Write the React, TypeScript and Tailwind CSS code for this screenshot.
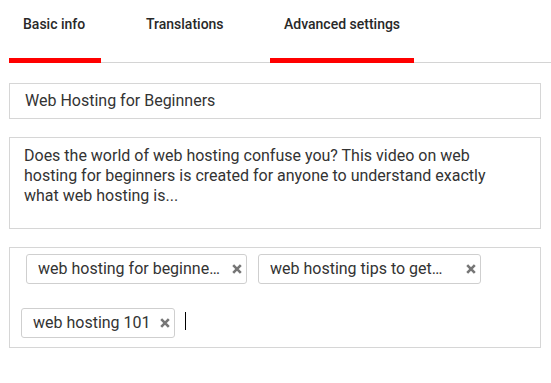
import React from "react"

type Tab = { label: string; width: string; active: boolean }

const tabs: Tab[] = [
  { label: "Basic info", width: "w-[92px]", active: true },
  { label: "Translations", width: "w-[107px]", active: false },
  { label: "Advanced settings", width: "w-[144px]", active: true },
]

function CloseIcon() {
  return (
    <svg width="10" height="10" viewBox="0 0 10 10" className="shrink-0">
      <path d="M1.2 1.2 L8.8 8.8 M8.8 1.2 L1.2 8.8" stroke="#767676" strokeWidth="2.6" />
    </svg>
  )
}

function Chip({ text, width, className = "" }: { text: string; width: string; className?: string }) {
  return (
    <div
      className={`flex h-[30px] ${width} items-center rounded-[3px] border border-[#cfcfcf] pl-[11px] pr-[4px] ${className}`}
    >
      <span className="flex-1 truncate whitespace-nowrap text-[16px] leading-[20px] text-[#333]">{text}</span>
      <CloseIcon />
    </div>
  )
}

export default function App() {
  return (
    <div className="h-[383px] w-[551px] overflow-hidden bg-white font-['Roboto',sans-serif] text-[#333]">
      {/* Tabs */}
      <div className="ml-[9px] flex gap-[31px] border-b border-[#d4d4d4]">
        {tabs.map((t) => (
          <div key={t.label} className={`-mb-px flex h-[63px] ${t.width} flex-col justify-between`}>
            <div className="pl-[14px] pt-[16px] text-[14px] font-medium leading-[16px] whitespace-nowrap text-[#282828]">
              {t.label}
            </div>
            <div className={`h-[5px] ${t.active ? "bg-[#ff0000]" : "bg-transparent"}`} />
          </div>
        ))}
      </div>

      {/* Title */}
      <div className="ml-[9px] mr-[10px] mt-[20px] flex h-[36px] items-center border border-[#d6d6d6] pl-[15px] text-[16px] leading-[20px]">
        Web Hosting for Beginners
      </div>

      {/* Description */}
      <div className="ml-[9px] mr-[10px] mt-[18px] h-[92px] border border-[#d6d6d6] pl-[14px] pr-[14px] pt-[8px] text-[16px] leading-[20px]">
        Does the world of web hosting confuse you? This video on web
        <br />
        hosting for beginners is created for anyone to understand exactly
        <br />
        what web hosting is...
      </div>

      {/* Tags */}
      <div className="ml-[9px] mr-[10px] mt-[18px] h-[101px] border border-[#d6d6d6] pl-[11px] pt-[6px]">
        <div className="flex flex-wrap items-start gap-x-[11px] gap-y-[24px]">
          <Chip text="web hosting for beginne…" width="w-[221px]" className="ml-[5px]" />
          <Chip text="web hosting tips to get…" width="w-[223px]" className="[&>span]:pr-[10px]" />
          <Chip text="web hosting 101" width="w-[154px]" />
          <div className="-ml-px mt-[4px] h-[18px] w-px bg-black" />
        </div>
      </div>
    </div>
  )
}
